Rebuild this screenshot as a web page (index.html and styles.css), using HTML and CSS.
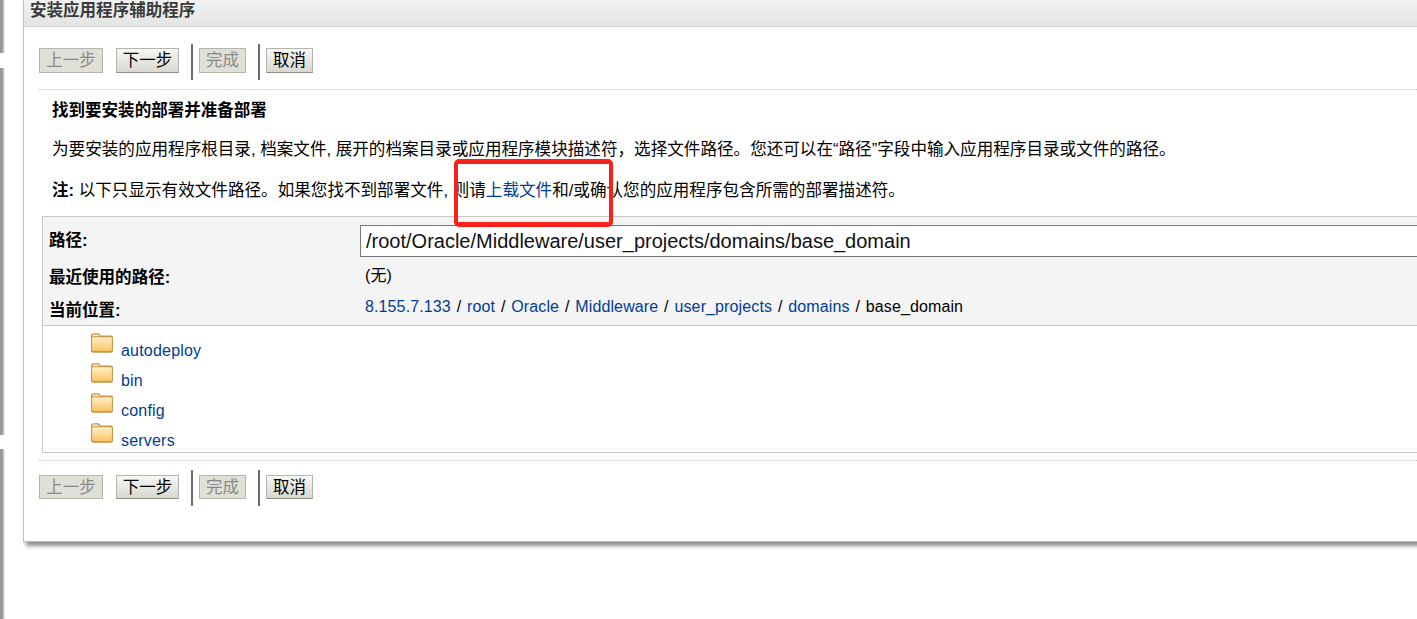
FILE: index.html
```html
<!DOCTYPE html>
<html lang="zh">
<head>
<meta charset="utf-8">
<title>安装应用程序辅助程序</title>
<link rel="stylesheet" href="styles.css">
</head>
<body>
<svg class="defs" width="0" height="0" aria-hidden="true">
  <defs>
    <linearGradient id="folderFill" x1="0" y1="0" x2="0" y2="1">
      <stop offset="0" stop-color="#fff0c8"/>
      <stop offset="1" stop-color="#fbc566"/>
    </linearGradient>
    <symbol id="folder" viewBox="0 0 22 20">
      <path d="M0 17.6V2.6C0 1.2 1 .3 2.4.3h4.4c1 0 1.6.4 2.2 1.2l.7 1h10c1.4 0 2.3.9 2.3 2.2v12.9c0 1.3-.9 2.1-2.2 2.1H2.2C.9 19.700 0 18.900 0 17.600z" fill="#c8974e"/>
      <path d="M1.100 16.600V5.700c0-.9.600-1.500 1.500-1.500h16.800c.9 0 1.500.6 1.500 1.500v10.900c0 .8-.5 1.300-1.300 1.300H2.400c-.8 0-1.300-.5-1.300-1.300z" fill="url(#folderFill)"/>
      <path d="M1.300 2.900c.3-.9.700-1.400 1.500-1.400h3.800c.8 0 1.300.3 1.700 1l.5.7H2.600c-.5 0-1 .2-1.300.5z" fill="#fbe6b4"/>
    </symbol>
  </defs>
</svg>
<div class="page">
  <div class="edge">
    <div class="edge-seg seg-a"></div>
    <div class="edge-seg seg-b"></div>
    <div class="edge-seg seg-c"></div>
  </div>
  <main class="panel">
    <h1 class="title">安装应用程序辅助程序</h1>
    <div class="content">
      <div class="toolbar top">
        <button class="btn off w64">上一步</button>
        <button class="btn w63">下一步</button>
        <span class="sep"></span>
        <button class="btn off w47">完成</button>
        <span class="sep"></span>
        <button class="btn w47">取消</button>
      </div>
      <div class="intro">
        <h2 class="heading">找到要安装的部署并准备部署</h2>
        <p class="para">为要安装的应用程序根目录, 档案文件, 展开的档案目录或应用程序模块描述符，选择文件路径。您还可以在“路径”字段中输入应用程序目录或文件的路径。</p>
        <p class="para note"><b>注:</b> 以下只显示有效文件路径。如果您找不到部署文件, 则请<a href="#">上载文件</a>和/或确认您的应用程序包含所需的部署描述符。</p>
      </div>
      <section class="browser">
        <div class="fields">
          <div class="row r-path"><span class="label">路径:</span><input class="path" value="/root/Oracle/Middleware/user_projects/domains/base_domain"></div>
          <div class="row r-recent"><span class="label">最近使用的路径:</span><span class="value">(无)</span></div>
          <div class="row r-loc"><span class="label">当前位置:</span><span class="value"><a href="#">8.155.7.133</a><span class="slash">/</span><a href="#">root</a><span class="slash">/</span><a href="#">Oracle</a><span class="slash">/</span><a href="#">Middleware</a><span class="slash">/</span><a href="#">user_projects</a><span class="slash">/</span><a href="#">domains</a><span class="slash">/</span>base_domain</span></div>
        </div>
        <ul class="files">
          <li><svg class="folder"><use href="#folder"/></svg><a href="#">autodeploy</a></li>
          <li><svg class="folder"><use href="#folder"/></svg><a href="#">bin</a></li>
          <li><svg class="folder"><use href="#folder"/></svg><a href="#">config</a></li>
          <li><svg class="folder"><use href="#folder"/></svg><a href="#">servers</a></li>
        </ul>
      </section>
      <div class="toolbar bottom">
        <button class="btn off w64">上一步</button>
        <button class="btn w63">下一步</button>
        <span class="sep"></span>
        <button class="btn off w47">完成</button>
        <span class="sep"></span>
        <button class="btn w47">取消</button>
      </div>
    </div>
  </main>
  <div class="callout"></div>
</div>
</body>
</html>
```
FILE: styles.css
```css
* { box-sizing: border-box; }
html, body { margin: 0; height: 100%; overflow: hidden; background: #fff; }
body { font-family: "Liberation Sans", "Noto Sans CJK SC", sans-serif; font-size: 16px; color: #000; }
a { color: #003c96; text-decoration: none; }
.defs { position: absolute; }
.page { position: relative; display: flex; width: 1417px; height: 619px; overflow: hidden; }
.edge { width: 23px; flex: none; display: flex; flex-direction: column; }
.edge-seg { width: 5px; background: linear-gradient(90deg, #a0a0a0, #8e8e8e 25%, #a8a8a8 55%, #e2e2e2 85%, #fff); }
.seg-a { height: 53px; margin-bottom: 15px; }
.seg-b { height: 367px; margin-bottom: 14px; }
.seg-c { height: 170px; }
.panel { width: 1500px; flex: none; height: 542px; background: #fff; border-left: 1px solid #c2c2c2; border-bottom: 1px solid #bbb; box-shadow: 3px 4px 4px #8f8f8f; }
.title { margin: 0; height: 27px; padding: 1px 0 0 6px; font-size: 16.55px; line-height: 20px; font-weight: 700; color: #3a3a3a; background: linear-gradient(#f1f2f1, #e3e5e3); border-bottom: 1px solid #d3d5d3; }
.content { padding: 0 0 0 15px; }
.toolbar { display: flex; align-items: flex-start; }
.toolbar.top { height: 36px; margin-top: 17px; margin-bottom: 9px; }
.toolbar.bottom { border-top: 1px dotted #c4c4c4; height: 46px; padding-top: 9px; margin-top: 7px; }
.btn { height: 25px; padding: 0 0 2px; margin: 4px 0 0; font: 16.5px/18px "Liberation Sans", "Noto Sans CJK SC", sans-serif; color: #000; background: linear-gradient(#f7f7f3, #d8d8d1); border: 1px solid #b5b5ae; border-bottom-color: #8e8e88; }
.bottom .btn { height: 24px; margin-top: 5px; padding-bottom: 0; }
.btn.off { color: #8a8a85; background: #e0e0d9; border-color: #b5b5ae; }
.w64 { width: 64px; margin-right: 13px; }
.w63 { width: 63px; margin-right: 12px; }
.w47 { width: 47px; }
.sep { width: 2px; height: 36px; background: #6b6b6b; margin-right: 6px; }
.w47 + .sep { margin-left: 12px; }
.intro { border-top: 1px dotted #c4c4c4; padding: 9px 0 0 13px; height: 127px; }
.heading { margin: 0; font-size: 16.55px; font-weight: 700; line-height: 24px; }
.para { margin: 15px 0 0; font-size: 16.58px; line-height: 24px; white-space: nowrap; }
.note { margin-top: 17px; }
.browser { margin-left: 3px; border: 1px solid #c8c8c8; border-right: 0; height: 237px; }
.fields { background: #f4f4f4; height: 109px; border-bottom: 1px solid #c8c8c8; padding: 8px 0 0 6px; }
.row { display: flex; align-items: center; }
.label { width: 311px; font-size: 16.55px; font-weight: 700; flex: none; }
.r-path { height: 32px; }
.r-path .label { margin-top: -5px; }
.r-recent { height: 30px; margin-top: 2px; }
.r-recent .label { margin-top: 3px; }
.r-loc { height: 30px; margin-top: 3px; }
.r-loc .label { margin-top: 3px; }
.value { padding-left: 5px; white-space: nowrap; letter-spacing: .12px; }
.slash { margin: 0 5.800px; }
.path { width: 1200px; height: 32px; border: 1px solid #777; background: #fff; padding: 0 5px; font: 20px "Liberation Sans", sans-serif; color: #111; }
.files { margin: 0; padding: 5px 0 0 48px; list-style: none; }
.files li { display: flex; height: 30px; align-items: flex-start; }
.files a { margin-top: 10px; line-height: 20px; margin-left: 8px; letter-spacing: .2px; }
.folder { width: 22px; height: 20px; margin-top: 2px; flex: none; }
.callout { position: absolute; left: 454px; top: 159px; width: 159px; height: 68px; border-style: solid; border-width: 5px 4px; border-color: #f8211c; border-radius: 5px; }
```
